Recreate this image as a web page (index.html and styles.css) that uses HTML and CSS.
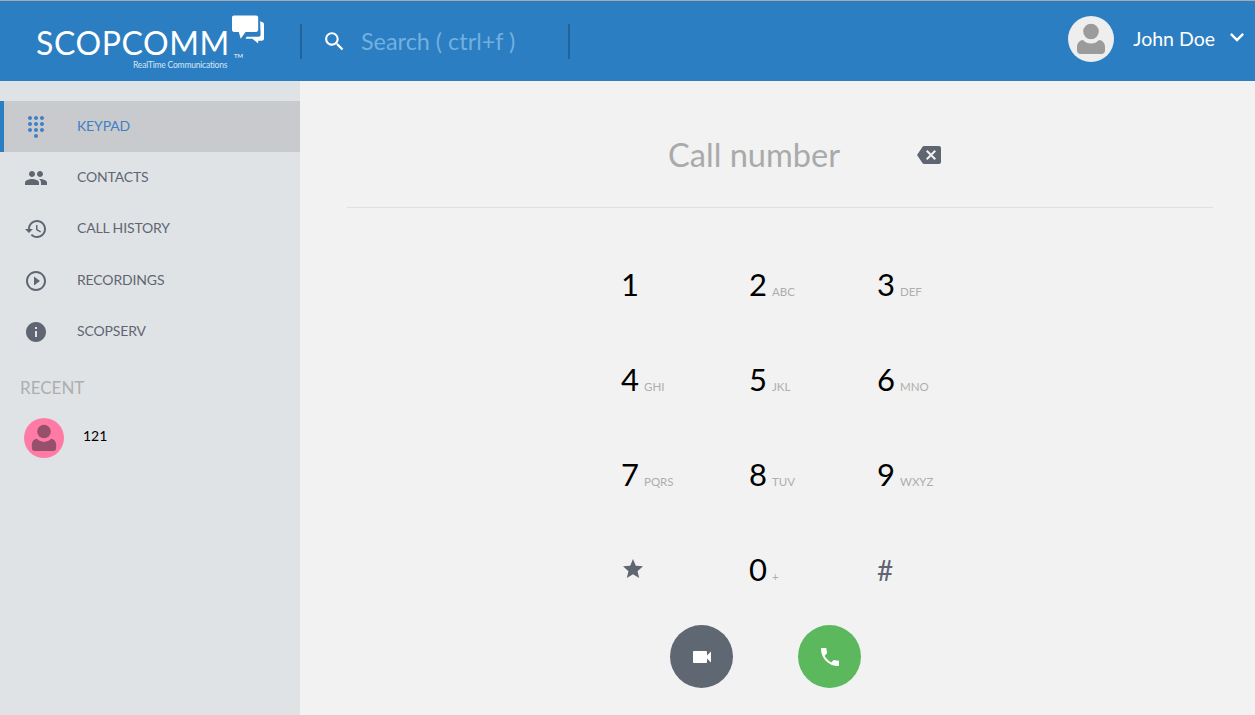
FILE: index.html
```html
<!DOCTYPE html>
<html lang="en">
<head>
    <meta charset="UTF-8">
    <title>ScopComm</title>
    <link rel="stylesheet" href="styles.css">
</head>
<body>
    <svg class="icon-defs" width="0" height="0">
        <symbol id="i-person" viewBox="0 0 46 46">
            <circle cx="23" cy="15.500" r="7.800"/>
            <path d="M15 24c2 2.500 5 3.500 8 3.500s6-1 8-3.500c4 .5 6 3.500 6 7v3.500c0 2-1.500 3.500-3.500 3.500h-21c-2 0-3.500-1.500-3.500-3.500V31c0-3.500 2-6.500 6-7z"/>
        </symbol>
    </svg>

    <!-- Top bar -->
    <header class="topbar">
        <div class="logo">
            <span class="logo-name">SCOPCOMM</span>
            <span class="logo-tm">TM</span>
            <span class="logo-sub">RealTime Communications</span>
            <svg class="logo-bubbles" viewBox="0 0 33 31">
                <path fill="#fff" d="M2 1h23c1 0 2 1 2 2v13c0 1-1 2-2 2H14l-5 7-2-7H2c-1 0-2-1-2-2V3c0-1 1-2 2-2z"/>
                <path fill="#fff" d="M29 7l2.500 1c.8.3 1.500 1 1.500 2v15c0 1-1 2-2 2h-4v3l-6-5h-7l1-2h12c2 0 2.500-1 2.500-2.500z"/>
            </svg>
        </div>
        <div class="search">
            <svg class="search-icon" viewBox="0 0 24 24"><path d="M15.500 14h-.79l-.28-.27C15.410 12.590 16 11.110 16 9.500 16 5.910 13.090 3 9.500 3S3 5.910 3 9.500 5.910 16 9.500 16c1.610 0 3.090-.59 4.230-1.570l.27.28v.79l5 4.990L20.490 19l-4.990-5zm-6 0C7.010 14 5 11.990 5 9.500S7.010 5 9.500 5 14 7.010 14 9.500 11.990 14 9.500 14z"/></svg>
            <span class="search-text">Search ( ctrl+f )</span>
        </div>
        <div class="user">
            <svg class="user-avatar" viewBox="0 0 46 46"><use href="#i-person"/></svg>
            <span class="user-name">John Doe</span>
            <svg class="user-arrow" viewBox="0 0 24 24"><path d="M7.410 8.590L12 13.170l4.590-4.580L18 10l-6 6-6-6 1.410-1.410z"/></svg>
        </div>
    </header>

    <div class="layout">
        <!-- Sidebar -->
        <aside class="sidebar">
            <ul class="menu">
                <li class="menu-item active">
                    <svg class="menu-icon" viewBox="0 0 24 24"><path d="M12 19c-1.100 0-2 .9-2 2s.9 2 2 2 2-.9 2-2-.9-2-2-2zM6 1c-1.100 0-2 .9-2 2s.9 2 2 2 2-.9 2-2-.9-2-2-2zm0 6c-1.100 0-2 .9-2 2s.9 2 2 2 2-.9 2-2-.9-2-2-2zm0 6c-1.100 0-2 .9-2 2s.9 2 2 2 2-.9 2-2-.9-2-2-2zm12-8c1.100 0 2-.9 2-2s-.9-2-2-2-2 .9-2 2 .9 2 2 2zm-6 8c-1.100 0-2 .9-2 2s.9 2 2 2 2-.9 2-2-.9-2-2-2zm6 0c-1.100 0-2 .9-2 2s.9 2 2 2 2-.9 2-2-.9-2-2-2zm0-6c-1.100 0-2 .9-2 2s.9 2 2 2 2-.9 2-2-.9-2-2-2zm-6 0c-1.100 0-2 .9-2 2s.9 2 2 2 2-.9 2-2-.9-2-2-2zm0-6c-1.100 0-2 .9-2 2s.9 2 2 2 2-.9 2-2-.9-2-2-2z"/></svg>
                    <span class="menu-label">KEYPAD</span>
                </li>
                <li class="menu-item">
                    <svg class="menu-icon" viewBox="0 0 24 24"><path d="M16 11c1.660 0 2.990-1.340 2.990-3S17.660 5 16 5c-1.660 0-3 1.340-3 3s1.340 3 3 3zm-8 0c1.660 0 2.990-1.340 2.990-3S9.660 5 8 5C6.340 5 5 6.340 5 8s1.340 3 3 3zm0 2c-2.330 0-7 1.170-7 3.500V19h14v-2.500c0-2.330-4.670-3.500-7-3.500zm8 0c-.29 0-.62.02-.97.05 1.160.84 1.970 1.970 1.970 3.450V19h6v-2.500c0-2.330-4.670-3.500-7-3.500z"/></svg>
                    <span class="menu-label">CONTACTS</span>
                </li>
                <li class="menu-item">
                    <svg class="menu-icon" viewBox="0 0 24 24"><path d="M13 3c-4.970 0-9 4.030-9 9H1l3.890 3.890.07.14L9 12H6c0-3.870 3.130-7 7-7s7 3.130 7 7-3.130 7-7 7c-1.930 0-3.680-.79-4.940-2.060l-1.420 1.420C8.270 19.990 10.510 21 13 21c4.970 0 9-4.030 9-9s-4.030-9-9-9zm-1 5v5l4.280 2.540.72-1.210-3.500-2.080V8H12z"/></svg>
                    <span class="menu-label">CALL HISTORY</span>
                </li>
                <li class="menu-item">
                    <svg class="menu-icon" viewBox="0 0 24 24"><path d="M10 16.500l6-4.500-6-4.500v9zM12 2C6.480 2 2 6.480 2 12s4.480 10 10 10 10-4.480 10-10S17.520 2 12 2zm0 18c-4.410 0-8-3.590-8-8s3.590-8 8-8 8 3.590 8 8-3.590 8-8 8z"/></svg>
                    <span class="menu-label">RECORDINGS</span>
                </li>
                <li class="menu-item">
                    <svg class="menu-icon" viewBox="0 0 24 24"><path d="M12 2C6.480 2 2 6.480 2 12s4.480 10 10 10 10-4.480 10-10S17.520 2 12 2zm1 15h-2v-6h2v6zm0-8h-2V7h2v2z"/></svg>
                    <span class="menu-label">SCOPSERV</span>
                </li>
            </ul>
            <div class="recent-title">RECENT</div>
            <div class="recent-item">
                <span class="recent-avatar">
                    <svg viewBox="0 0 46 46"><use href="#i-person"/></svg>
                </span>
                <span class="recent-number">121</span>
            </div>
        </aside>

        <!-- Keypad -->
        <main class="main">
            <div class="call-row">
                <span class="call-number">Call number</span>
                <svg class="call-clear" viewBox="0 0 24 24"><path d="M22 3H7c-.69 0-1.230.35-1.590.88L0 12l5.410 8.110c.36.53.9.89 1.590.89h15c1.100 0 2-.9 2-2V5c0-1.100-.9-2-2-2zm-3 12.590L17.590 17 14 13.410 10.410 17 9 15.590 12.590 12 9 8.410 10.410 7 14 10.590 17.590 7 19 8.410 15.410 12 19 15.590z"/></svg>
            </div>
            <div class="keypad">
                <div class="key"><span class="key-num">1</span></div>
                <div class="key"><span class="key-num">2</span><span class="key-sub">ABC</span></div>
                <div class="key"><span class="key-num">3</span><span class="key-sub">DEF</span></div>
                <div class="key"><span class="key-num">4</span><span class="key-sub">GHI</span></div>
                <div class="key"><span class="key-num">5</span><span class="key-sub">JKL</span></div>
                <div class="key"><span class="key-num">6</span><span class="key-sub">MNO</span></div>
                <div class="key"><span class="key-num">7</span><span class="key-sub">PQRS</span></div>
                <div class="key"><span class="key-num">8</span><span class="key-sub">TUV</span></div>
                <div class="key"><span class="key-num">9</span><span class="key-sub">WXYZ</span></div>
                <div class="key"><svg class="key-star" viewBox="0 0 24 24"><path d="M12 17.270L18.180 21l-1.640-6.870L22 9.240l-7.190-.61L12 2 9.190 8.630 2 9.240l5.460 4.890L5.820 21z"/></svg></div>
                <div class="key"><span class="key-num">0</span><span class="key-sub">+</span></div>
                <div class="key"><span class="key-num key-hash">#</span></div>
            </div>
            <div class="call-actions">
                <button class="call-btn video">
                    <svg viewBox="0 0 24 24"><path d="M17 10.500V7c0-.55-.45-1-1-1H4c-.55 0-1 .45-1 1v10c0 .55.45 1 1 1h12c.55 0 1-.45 1-1v-3.500l4 4v-11l-4 4z"/></svg>
                </button>
                <button class="call-btn audio">
                    <svg viewBox="0 0 24 24"><path d="M6.620 10.790c1.440 2.830 3.760 5.140 6.590 6.590l2.200-2.200c.27-.27.67-.36 1.020-.24 1.120.37 2.330.57 3.570.57.55 0 1 .45 1 1V20c0 .55-.45 1-1 1-9.390 0-17-7.610-17-17 0-.55.45-1 1-1h3.500c.55 0 1 .45 1 1 0 1.250.2 2.450.57 3.570.11.35.03.74-.25 1.020l-2.200 2.200z"/></svg>
                </button>
            </div>
        </main>
    </div>
</body>
</html>
```

FILE: styles.css
```css
* {
    margin: 0;
    padding: 0;
    box-sizing: border-box;
}

body {
    font-family: 'Lato', 'Noto Sans', sans-serif;
    background-color: #f2f2f2;
    color: #5f6672;
    height: 715px;
    overflow: hidden;
}

.icon-defs {
    position: absolute;
}

/* Top bar */
.topbar {
    display: flex;
    align-items: center;
    height: 81px;
    background-color: #2b7ec1;
    border-top: 1px solid #a9a9a9;
    color: #fff;
}

.logo {
    position: relative;
    width: 300px;
    height: 80px;
    flex-shrink: 0;
}

.logo-name {
    position: absolute;
    left: 36px;
    top: 26px;
    font-size: 32px;
    line-height: 32px;
    letter-spacing: .6px;
    color: #fff;
}

.logo-tm {
    position: absolute;
    left: 234px;
    top: 51px;
    font-size: 6px;
    line-height: 8px;
}

.logo-sub {
    position: absolute;
    left: 133px;
    top: 59px;
    font-size: 8.500px;
    line-height: 10px;
    letter-spacing: -.2px;
    color: #d5e6f4;
}

.logo-bubbles {
    position: absolute;
    left: 232px;
    top: 13px;
    width: 32px;
    height: 31px;
}

.search {
    display: flex;
    align-items: center;
    width: 270px;
    height: 35px;
    padding-left: 20px;
    border-left: 2px solid #22649a;
    border-right: 2px solid #22649a;
}

.search-icon {
    width: 25px;
    height: 25px;
    fill: #fff;
    flex-shrink: 0;
}

.search-text {
    margin-left: 14px;
    font-size: 23.400px;
    color: #72b0e0;
}

.user {
    display: flex;
    align-items: center;
    margin-left: auto;
    margin-bottom: 4px;
    padding-right: 4px;
}

.user-avatar {
    width: 46px;
    height: 46px;
    border-radius: 50%;
    background-color: #eeeeee;
    fill: #9b9b9b;
}

.user-name {
    margin-left: 19px;
    margin-bottom: 1px;
    font-size: 19.500px;
}

.user-arrow {
    width: 28px;
    height: 28px;
    margin-left: 8px;
    margin-bottom: 4px;
    fill: #fff;
}

/* Layout */
.layout {
    display: flex;
    height: 634px;
}

.sidebar {
    width: 300px;
    flex-shrink: 0;
    padding-top: 20px;
    background-color: #e0e3e6;
}

.menu {
    list-style: none;
}

.menu-item {
    display: flex;
    align-items: center;
    height: 51.300px;
    padding-left: 24px;
    font-size: 14px;
    letter-spacing: -.15px;
}

.menu-item.active {
    padding-left: 20px;
    border-left: 4px solid #2b7ec1;
    background-color: #c9cacd;
    color: #3f7fc4;
}

.menu-icon {
    width: 24px;
    height: 24px;
    margin-right: 29px;
    fill: currentColor;
    flex-shrink: 0;
}

.menu-label {
    margin-bottom: 3px;
}

.recent-title {
    margin-top: 21px;
    padding-left: 20px;
    font-size: 17px;
    line-height: 20px;
    color: #aeaeae;
}

.recent-item {
    display: flex;
    align-items: center;
    margin-top: 20px;
    padding-left: 24px;
}

.recent-avatar {
    display: flex;
    align-items: center;
    justify-content: center;
    width: 40px;
    height: 40px;
    border-radius: 50%;
    background-color: #ff7ba5;
    fill: #96506b;
}

.recent-avatar svg {
    width: 40px;
    height: 40px;
}

.recent-number {
    margin-left: 19px;
    margin-bottom: 6px;
    font-size: 14px;
    color: #000;
}

/* Keypad */
.main {
    flex: 1;
    padding: 0 42px 0 47px;
}

.call-row {
    display: flex;
    align-items: center;
    height: 127px;
    padding-left: 321px;
    padding-top: 21px;
    border-bottom: 1px solid #dfdfdf;
}

.call-number {
    width: 249px;
    font-size: 32.600px;
    color: #aaaaaa;
}

.call-clear {
    width: 24px;
    height: 24px;
    margin-top: 1px;
    fill: #5f6672;
}

.keypad {
    display: grid;
    grid-template-columns: repeat(3, 128px);
    grid-auto-rows: 95px;
    margin-top: 29px;
    margin-left: 274px;
}

.key {
    display: flex;
    align-items: center;
    height: 95px;
}

.key-num {
    margin-bottom: 2px;
    font-size: 31px;
    color: #000;
}

.key-sub {
    margin-left: 5px;
    margin-top: 14px;
    font-size: 11.500px;
    color: #aeaeae;
}

.key-star {
    width: 24px;
    height: 24px;
    margin-bottom: 2px;
    fill: #5f6672;
}

.key-num.key-hash {
    margin-bottom: 0;
    font-size: 28px;
    color: #5f6672;
}

.call-actions {
    display: flex;
    gap: 65px;
    margin-top: 8px;
    margin-left: 323px;
}

.call-btn {
    display: flex;
    align-items: center;
    justify-content: center;
    width: 63px;
    height: 63px;
    border: none;
    border-radius: 50%;
    cursor: pointer;
}

.call-btn svg {
    width: 24px;
    height: 24px;
    fill: #fff;
}

.call-btn.video {
    background-color: #5f6772;
}

.call-btn.audio {
    background-color: #5cb85c;
}
```
